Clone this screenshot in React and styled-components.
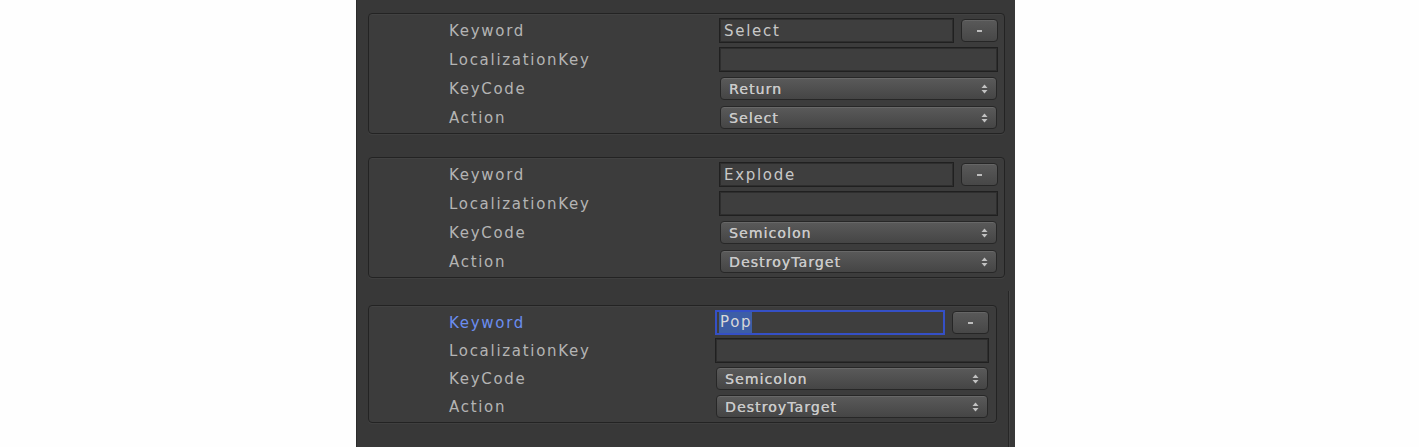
import React from 'react';
import styled, { createGlobalStyle } from 'styled-components';

const GlobalStyle = createGlobalStyle`
  body {
    margin: 0;
    background: #fefefe;
    font-family: "DejaVu Sans", "Liberation Sans", sans-serif;
  }
`;

const commands = [
  { keyword: 'Select', keyCode: 'Return', action: 'Select' },
  { keyword: 'Explode', keyCode: 'Semicolon', action: 'DestroyTarget' },
];

function Arrows() {
  return (
    <svg width="7" height="10" viewBox="0 0 7 10">
      <path d="M3.5 0.5 L6.5 4 H0.5 Z" fill="#c2c2c2" />
      <path d="M3.5 9.5 L6.5 6 H0.5 Z" fill="#c2c2c2" />
    </svg>
  );
}

function CommandPanel({ item, labelCol, padRight, width, rowGap, focused }) {
  return (
    <Panel $width={width} $padRight={padRight} $rowGap={rowGap}>
      <Row $labelCol={labelCol}>
        <Label $active={focused}>Keyword</Label>
        <FieldGroup>
          <TextField $focused={focused}>
            {focused ? <Selection>{item.keyword}</Selection> : item.keyword}
          </TextField>
          <MinusButton><Dash /></MinusButton>
        </FieldGroup>
      </Row>
      <Row $labelCol={labelCol}>
        <Label>LocalizationKey</Label>
        <TextField />
      </Row>
      <Row $labelCol={labelCol}>
        <Label>KeyCode</Label>
        <Dropdown>
          <span>{item.keyCode}</span>
          <Arrows />
        </Dropdown>
      </Row>
      <Row $labelCol={labelCol}>
        <Label>Action</Label>
        <Dropdown>
          <span>{item.action}</span>
          <Arrows />
        </Dropdown>
      </Row>
    </Panel>
  );
}

export default function App() {
  return (
    <>
      <GlobalStyle />
      <Page>
        <Inspector>
          <List>
            {commands.map((c) => (
              <CommandPanel key={c.keyword} item={c} labelCol={350} padRight={6} width={637} rowGap={4} />
            ))}
          </List>
          <DragSlot>
            <CommandPanel
              item={{ keyword: 'Pop', keyCode: 'Semicolon', action: 'DestroyTarget' }}
              labelCol={346}
              padRight={7}
              width={629}
              rowGap={3}
              focused
            />
          </DragSlot>
        </Inspector>
      </Page>
    </>
  );
}

const Page = styled.div`
  display: flex;
  height: 447px;
  padding-left: 356px;
  box-sizing: border-box;
`;

const Inspector = styled.div`
  width: 659px;
  height: 447px;
  box-sizing: border-box;
  background: #383838;
  border-left: 1px solid #2b2b2b;
  padding-top: 13px;
  display: flex;
  flex-direction: column;
`;

const List = styled.div`
  display: flex;
  flex-direction: column;
  gap: 23px;
  padding-left: 11px;
`;

const DragSlot = styled.div`
  flex: 1;
  margin-top: 13px;
  width: 652px;
  box-sizing: border-box;
  padding: 14px 11px 0 11px;
  border-right: 1px solid #262626;
  box-shadow: 1px 0 0 #424242;
`;

const Panel = styled.div`
  width: ${(p) => p.$width}px;
  box-sizing: border-box;
  background: #3c3c3c;
  border: 1px solid #232323;
  border-radius: 4px;
  box-shadow: inset 0 1px 0 rgba(255, 255, 255, 0.03), 0 1px 0 rgba(255, 255, 255, 0.04);
  padding: 4px ${(p) => p.$padRight}px 3px 0;
  display: flex;
  flex-direction: column;
  gap: ${(p) => p.$rowGap}px;
`;

const Row = styled.div`
  display: grid;
  grid-template-columns: ${(p) => p.$labelCol}px 1fr;
  height: 25px;
  align-items: center;
`;

const Label = styled.div`
  padding-left: 80px;
  font-size: 15px;
  letter-spacing: 1.7px;
  color: ${(p) => (p.$active ? '#6b8ef0' : '#b4b4b4')};
  white-space: nowrap;
`;

const FieldGroup = styled.div`
  display: flex;
  align-items: center;
  gap: 7px;
  height: 100%;
`;

const TextField = styled.div`
  flex: 1;
  height: 25px;
  box-sizing: border-box;
  background: #3e3e3e;
  border: ${(p) => (p.$focused ? '2px solid #3550c6' : '1px solid #202020')};
  box-shadow: ${(p) => (p.$focused ? 'none' : 'inset 0 0 0 1px #2e2e2e')};
  padding-left: ${(p) => (p.$focused ? '2px' : '4px')};
  display: flex;
  align-items: center;
  font-size: 15px;
  letter-spacing: 1.7px;
  color: #c8c8c8;
`;

const Selection = styled.span`
  background: #3d5ea6;
  color: #d8d8d8;
  height: 21px;
  line-height: 21px;
  padding-left: 1px;
`;

const MinusButton = styled.div`
  width: 37px;
  height: 23px;
  box-sizing: border-box;
  border: 1px solid #262626;
  border-radius: 4px;
  background: linear-gradient(#595959, #474747);
  box-shadow: inset 0 1px 0 rgba(255, 255, 255, 0.08);
  display: flex;
  align-items: center;
  justify-content: center;
`;

const Dash = styled.span`
  width: 5px;
  height: 2px;
  background: #bdbdbd;
`;

const Dropdown = styled.div`
  height: 23px;
  margin: 0 1px;
  box-sizing: border-box;
  border: 1px solid #272727;
  border-radius: 4px;
  background: linear-gradient(#5a5a5a, #454545);
  box-shadow: inset 0 1px 0 rgba(255, 255, 255, 0.09);
  display: flex;
  align-items: center;
  justify-content: space-between;
  padding: 0 8px 0 8px;
  font-size: 14px;
  letter-spacing: 1.1px;
  color: #cacaca;
  text-shadow: 0.3px 0 0 #cacaca;
`;
